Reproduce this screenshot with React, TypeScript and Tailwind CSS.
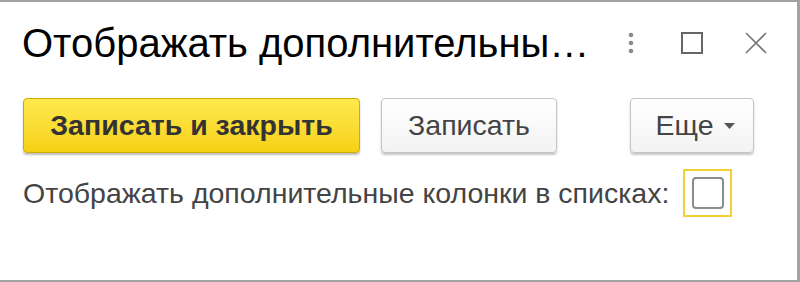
import React from "react";

export default function App() {
  return (
    <div
      className="w-[800px] h-[282px] bg-white border-t-2 border-r-[3px] border-b-2 border-[#a3a3a3] flex flex-col"
      style={{ fontFamily: '"Liberation Sans", Arial, sans-serif' }}
    >
      {/* Title bar */}
      <div className="h-[81px] flex items-center pl-[22px] pr-[30px]">
        <div className="flex-1 text-[40px] leading-none text-black whitespace-nowrap">
          Отображать дополнительны…
        </div>
        <div className="flex items-center">
          <svg width="8" height="22" viewBox="0 0 8 22" className="mr-[46px]">
            <circle cx="4" cy="3" r="2.3" fill="#8a8a8a" />
            <circle cx="4" cy="11" r="2.3" fill="#8a8a8a" />
            <circle cx="4" cy="19" r="2.3" fill="#8a8a8a" />
          </svg>
          <svg width="22" height="22" viewBox="0 0 22 22" className="mr-[42px]">
            <rect x="1" y="1" width="20" height="20" fill="none" stroke="#666" strokeWidth="2" />
          </svg>
          <svg width="22" height="22" viewBox="0 0 22 22">
            <path d="M1 1 L21 21 M21 1 L1 21" stroke="#777" strokeWidth="1.6" fill="none" />
          </svg>
        </div>
      </div>

      {/* Buttons */}
      <div className="mt-[15px] flex items-center pl-[23px]">
        <button className="w-[337px] h-[55px] rounded-[4px] border border-[#cfac00] bg-gradient-to-b from-[#ffe94d] to-[#f5d10c] shadow-[0_2px_2px_rgba(0,0,0,0.25)] text-[28.5px] font-bold text-[#333]">
          Записать и закрыть
        </button>
        <button className="ml-[21px] w-[176px] h-[55px] rounded-[4px] border border-[#c4c4c4] bg-gradient-to-b from-white to-[#f3f3f3] shadow-[0_2px_2px_rgba(0,0,0,0.22)] text-[28.5px] text-[#444]">
          Записать
        </button>
        <button className="ml-[73px] w-[124px] h-[55px] rounded-[4px] border border-[#c4c4c4] bg-gradient-to-b from-white to-[#f3f3f3] shadow-[0_2px_2px_rgba(0,0,0,0.22)] text-[28.5px] text-[#444] flex items-center justify-center gap-[10px] pl-[6px]">
          <span>Еще</span>
          <svg width="11" height="6" viewBox="0 0 11 6">
            <path d="M0 0 L11 0 L5.5 6 Z" fill="#555" />
          </svg>
        </button>
      </div>

      {/* Checkbox row */}
      <div className="mt-[16px] h-[48px] flex items-center pl-[23px]">
        <span className="text-[28.5px] text-[#444] whitespace-nowrap">
          Отображать дополнительные колонки в списках:
        </span>
        <div className="ml-[14px] w-[49px] h-[48px] border-2 border-[#f3cf35] flex items-center justify-center">
          <div className="w-[32px] h-[32px] rounded-[4px] border-2 border-[#8c8c8c] bg-white" />
        </div>
      </div>
    </div>
  );
}
